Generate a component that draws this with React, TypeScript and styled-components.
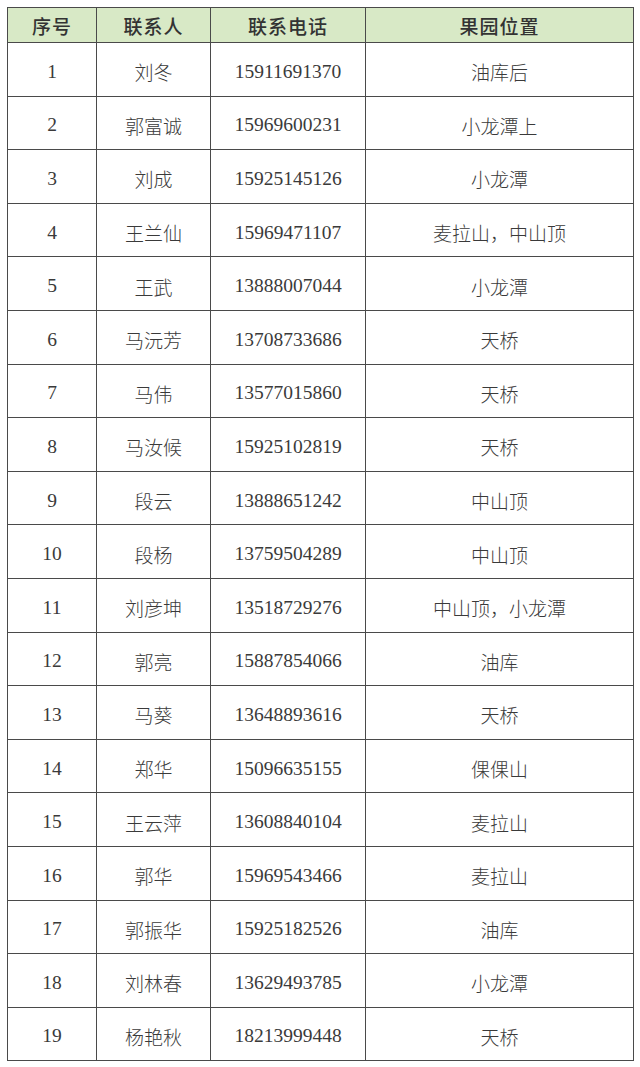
import React from "react";
import styled, { createGlobalStyle } from "styled-components";

const GlobalStyle = createGlobalStyle`
  html, body {
    margin: 0;
    padding: 0;
    background: #ffffff;
  }
`;

const Page = styled.div`
  padding: 7px 7px 0 7px;
  width: 640px;
  box-sizing: border-box;
`;

const Table = styled.table`
  width: 626px;
  border-collapse: collapse;
  table-layout: fixed;
  font-family: "Liberation Serif", "Noto Sans CJK SC", serif;
  color: #3a3a3a;
`;

const HeadCell = styled.th`
  height: 35px;
  box-sizing: border-box;
  padding: 1px 0 0 0;
  background: #d8e9c6;
  border: 1px solid #4a4a4a;
  font-size: 19px;
  font-weight: 500;
  text-align: center;
  letter-spacing: 1px;
  color: #333;
`;

const Cell = styled.td`
  height: 53.6px;
  padding: 5px 0 0 0;
  box-sizing: border-box;
  border: 1px solid #4a4a4a;
  font-size: 19px;
  font-weight: 300;
  text-align: center;
  vertical-align: middle;
`;

const Digits = styled.span`
  font-size: 19.5px;
  font-weight: 400;
`;

const rows: [string, string, string][] = [
  ["刘冬", "15911691370", "油库后"],
  ["郭富诚", "15969600231", "小龙潭上"],
  ["刘成", "15925145126", "小龙潭"],
  ["王兰仙", "15969471107", "麦拉山，中山顶"],
  ["王武", "13888007044", "小龙潭"],
  ["马沅芳", "13708733686", "天桥"],
  ["马伟", "13577015860", "天桥"],
  ["马汝候", "15925102819", "天桥"],
  ["段云", "13888651242", "中山顶"],
  ["段杨", "13759504289", "中山顶"],
  ["刘彦坤", "13518729276", "中山顶，小龙潭"],
  ["郭亮", "15887854066", "油库"],
  ["马葵", "13648893616", "天桥"],
  ["郑华", "15096635155", "倮倮山"],
  ["王云萍", "13608840104", "麦拉山"],
  ["郭华", "15969543466", "麦拉山"],
  ["郭振华", "15925182526", "油库"],
  ["刘林春", "13629493785", "小龙潭"],
  ["杨艳秋", "18213999448", "天桥"],
];

const App: React.FC = () => {
  return (
    <Page>
      <GlobalStyle />
      <Table>
        <colgroup>
          <col style={{ width: 89 }} />
          <col style={{ width: 114 }} />
          <col style={{ width: 155 }} />
          <col style={{ width: 268 }} />
        </colgroup>
        <thead>
          <tr>
            <HeadCell>序号</HeadCell>
            <HeadCell>联系人</HeadCell>
            <HeadCell>联系电话</HeadCell>
            <HeadCell>果园位置</HeadCell>
          </tr>
        </thead>
        <tbody>
          {rows.map(([name, phone, place], i) => (
            <tr key={phone}>
              <Cell><Digits>{i + 1}</Digits></Cell>
              <Cell>{name}</Cell>
              <Cell><Digits>{phone}</Digits></Cell>
              <Cell>{place}</Cell>
            </tr>
          ))}
        </tbody>
      </Table>
    </Page>
  );
};

export default App;
